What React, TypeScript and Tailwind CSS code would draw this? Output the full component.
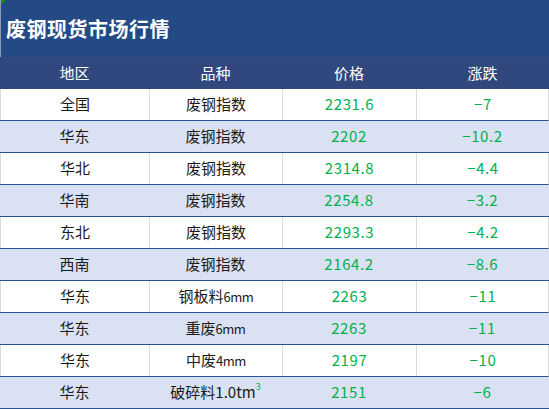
import React from 'react';

interface Quote {
  region: string;
  name: string;
  unit?: string;
  sup?: string;
  price: string;
  change: string;
}

const quotes: Quote[] = [
  { region: '全国', name: '废钢指数', price: '2231.6', change: '−7' },
  { region: '华东', name: '废钢指数', price: '2202', change: '−10.2' },
  { region: '华北', name: '废钢指数', price: '2314.8', change: '−4.4' },
  { region: '华南', name: '废钢指数', price: '2254.8', change: '−3.2' },
  { region: '东北', name: '废钢指数', price: '2293.3', change: '−4.2' },
  { region: '西南', name: '废钢指数', price: '2164.2', change: '−8.6' },
  { region: '华东', name: '钢板料', unit: '6mm', price: '2263', change: '−11' },
  { region: '华东', name: '重废', unit: '6mm', price: '2263', change: '−11' },
  { region: '华东', name: '中废', unit: '4mm', price: '2197', change: '−10' },
  { region: '华东', name: '破碎料1.0tm', sup: '3', price: '2151', change: '−6' }
];

const cols = 'grid grid-cols-[149px_133px_134px_133px]';

export default function App() {
  return (
    <div
      className="w-[549px] h-[409px] bg-white overflow-hidden"
      style={{ fontFamily: '"Noto Sans CJK SC", "Noto Sans", sans-serif' }}
    >
      <div className="relative h-[57px] bg-[#234a84] flex items-center pl-[5px] border-l border-[#8a9bb8]">
        <span className="absolute left-0 top-0 w-0 h-0 border-t-[5px] border-r-[5px] border-t-[#1e8a1e] border-r-transparent" />
        <h1 className="text-white text-[20px] font-bold tracking-[0.5px] mt-[1px]">废钢现货市场行情</h1>
      </div>
      <div className={`${cols} h-[32px] bg-[#30487d] text-white text-[15px] items-center text-center`}>
        <div>地区</div>
        <div>品种</div>
        <div>价格</div>
        <div>涨跌</div>
      </div>
      {quotes.map((q, i) => {
        const striped = i % 2 === 1;
        const divider = striped ? '' : 'border-l border-[#dcdcdc]';
        return (
          <div
            key={i}
            className={`${cols} h-[32px] border-b border-[#2a5394] text-[15px] ${
              striped ? 'bg-[#d9e1f2]' : 'bg-white border-r border-r-[#dcdcdc]'
            }`}
          >
            <div className={`flex items-center justify-center text-[#1a1a1a] ${divider}`}>{q.region}</div>
            <div className={`flex items-center justify-center text-[#1a1a1a] ${divider}`}>
              <span>{q.name}</span>
              {q.unit && <span className="text-[13px] tracking-[-0.5px]">{q.unit}</span>}
              {q.sup && <sup className="text-[9px] text-[#00b050] -top-[6px]">{q.sup}</sup>}
            </div>
            <div className={`flex items-center justify-center text-[#00b050] tracking-[0.6px] ${divider}`}>{q.price}</div>
            <div className={`flex items-center justify-center text-[#00b050] tracking-[0.6px] ${divider}`}>{q.change}</div>
          </div>
        );
      })}
    </div>
  );
}
